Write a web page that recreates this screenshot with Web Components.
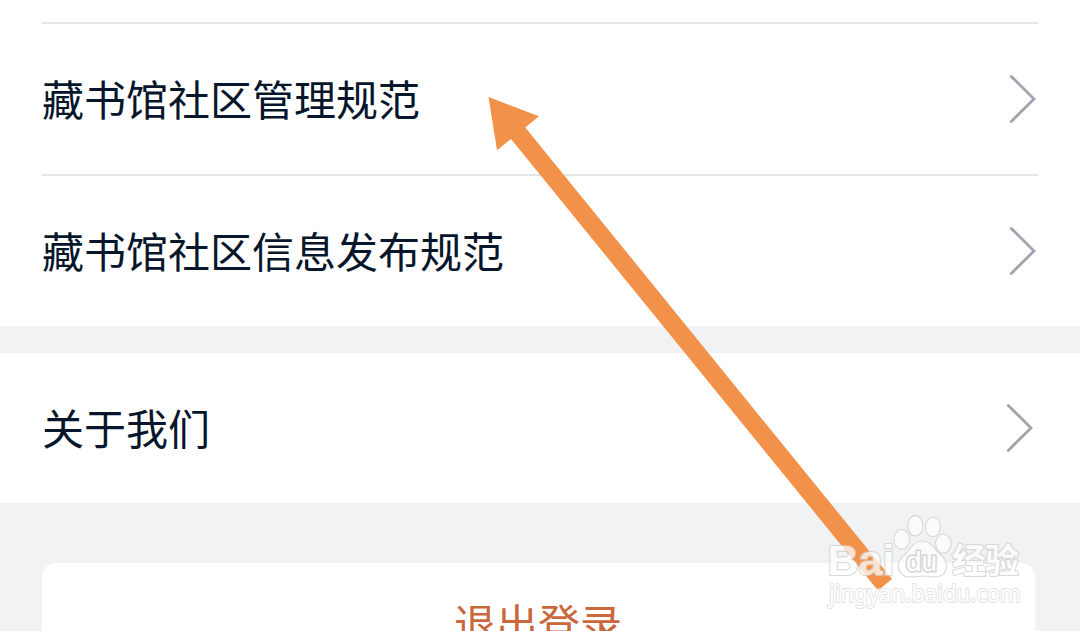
<!DOCTYPE html>
<html lang="zh-CN">
<head>
<meta charset="utf-8">
<title>设置</title>
<style>
  body {
    margin: 0;
    background: #fff;
    font-family: "Noto Sans CJK SC", sans-serif;
  }
</style>
</head>
<body>
<settings-page>
  <settings-group divided>
    <settings-row>藏书馆社区管理规范</settings-row>
    <settings-row>藏书馆社区信息发布规范</settings-row>
  </settings-group>
  <settings-group>
    <settings-row style="--chevron-shift: 3px">关于我们</settings-row>
  </settings-group>
  <logout-button slot="footer">退出登录</logout-button>
  <pointer-arrow slot="overlay"></pointer-arrow>
  <site-watermark slot="overlay"></site-watermark>
</settings-page>

<script>
class SettingsPage extends HTMLElement {
  constructor() {
    super()
    this.attachShadow({ mode: 'open' })
    this.shadowRoot.innerHTML = /* html */ `
      <style>
        :host {
          position: relative;
          display: flex;
          flex-direction: column;
          box-sizing: border-box;
          width: 1080px;
          height: 631px;
          overflow: hidden;
        }
        .groups {
          display: flex;
          flex-direction: column;
          gap: 27px;
          background: #f2f2f4;
        }
        footer {
          flex: 1;
          min-height: 0;
          padding: 60px 45px 0 42px;
          background: #f0f2f4;
        }
      </style>
      <div class="groups"><slot></slot></div>
      <footer><slot name="footer"></slot></footer>
      <slot name="overlay"></slot>
    `;
  }
}

class SettingsGroup extends HTMLElement {
  constructor() {
    super()
    this.attachShadow({ mode: 'open' })
    this.shadowRoot.innerHTML = /* html */ `
      <style>
        :host {
          display: block;
          padding: 0 42px;
          background: #fff;
        }
        :host([divided]) {
          padding-top: 22px;
        }
        :host([divided]) ::slotted(settings-row) {
          border-top: 2px solid #e6e6e6;
        }
      </style>
      <slot></slot>
    `;
  }
}

class SettingsRow extends HTMLElement {
  constructor() {
    super()
    this.attachShadow({ mode: 'open' })
    this.shadowRoot.innerHTML = /* html */ `
      <style>
        :host {
          display: flex;
          align-items: center;
          justify-content: space-between;
          height: 150px;
          color: #07162b;
          font-size: 42px;
          line-height: 60px;
        }
        .label {
          padding-bottom: 2px;
        }
        svg {
          width: 30px;
          height: 52px;
          margin-right: var(--chevron-shift, 0);
        }
      </style>
      <span class="label"><slot></slot></span>
      <svg viewBox="0 0 30 52" fill="none" stroke="#a0a5ad" stroke-width="2.8" stroke-linecap="round">
        <path d="M3.3 3.4 26 26 3.3 48.4"/>
      </svg>
    `;
  }
}

class LogoutButton extends HTMLElement {
  constructor() {
    super()
    this.attachShadow({ mode: 'open' })
    this.shadowRoot.innerHTML = /* html */ `
      <style>
        :host {
          display: block;
        }
        button {
          display: block;
          width: 100%;
          height: 120px;
          padding: 0 1px 2px 0;
          border: 0;
          border-radius: 14px;
          background: #fff;
          color: #c9673d;
          font: inherit;
          font-size: 42px;
          line-height: 118px;
        }
      </style>
      <button type="button"><slot></slot></button>
    `;
  }
}

class PointerArrow extends HTMLElement {
  constructor() {
    super()
    this.attachShadow({ mode: 'open' })
    this.shadowRoot.innerHTML = /* html */ `
      <style>
        :host {
          position: absolute;
          top: 0;
          left: 0;
          pointer-events: none;
        }
        svg {
          display: block;
        }
      </style>
      <svg width="1080" height="631" viewBox="0 0 1080 631">
        <path fill="#f2924a" d="M488.5 97 539 116.3 525.3 127.5 892 579 878 590.5 511 139 497 150.3Z"/>
      </svg>
    `;
  }
}

class SiteWatermark extends HTMLElement {
  constructor() {
    super()
    this.attachShadow({ mode: 'open' })
    this.shadowRoot.innerHTML = /* html */ `
      <style>
        :host {
          position: absolute;
          top: 510px;
          left: 820px;
          pointer-events: none;
        }
        svg {
          display: block;
        }
        .mark {
          fill: #fff;
          stroke: #cdcdcd;
          stroke-width: 2.2;
          stroke-linejoin: round;
          paint-order: stroke;
          opacity: 0.75;
        }
        .latin {
          font-family: "Liberation Sans", sans-serif;
          font-weight: bold;
        }
        .du {
          font-family: "Liberation Sans", sans-serif;
          stroke: #ccc;
          stroke-width: 3.4;
        }
        .url {
          font-family: "Noto Sans", sans-serif;
          stroke: #dadada;
          stroke-width: 2;
        }
      </style>
      <svg width="210" height="110" viewBox="0 0 210 110">
        <text class="mark latin" x="7.5" y="64.5" font-size="43" textLength="67" lengthAdjust="spacingAndGlyphs">Bai</text>
        <g class="mark">
          <ellipse cx="81.7" cy="29.3" rx="7.3" ry="9.3"/>
          <ellipse cx="95.4" cy="15.8" rx="7" ry="9.6"/>
          <ellipse cx="113" cy="17" rx="7" ry="9.2" transform="rotate(8 113 17)"/>
          <ellipse cx="123.3" cy="33.6" rx="7.2" ry="9"/>
          <path d="M102 31.5C95 31.5 92 37 88 42C84 46 79 49 79 56C79 63 84 66.5 90 66.5C95 66.5 98 65.5 103 65.5C107 65.5 110 66.5 114 66.5C122 66.5 126 62 126 56C126 49 121 46 117 42C113 37 110 31.5 102 31.5Z"/>
        </g>
        <text class="mark du" x="86" y="60.5" font-size="27" textLength="31" lengthAdjust="spacingAndGlyphs">du</text>
        <text class="mark" x="132" y="62.5" font-family="Noto Sans CJK SC, sans-serif" font-weight="bold" font-size="34" textLength="67">经验</text>
        <text class="mark url" x="9" y="92" font-size="23" textLength="192" lengthAdjust="spacingAndGlyphs">jingyan.baidu.com</text>
      </svg>
    `;
  }
}

customElements.define('settings-page', SettingsPage);
customElements.define('settings-group', SettingsGroup);
customElements.define('settings-row', SettingsRow);
customElements.define('logout-button', LogoutButton);
customElements.define('pointer-arrow', PointerArrow);
customElements.define('site-watermark', SiteWatermark);
</script>
</body>
</html>
